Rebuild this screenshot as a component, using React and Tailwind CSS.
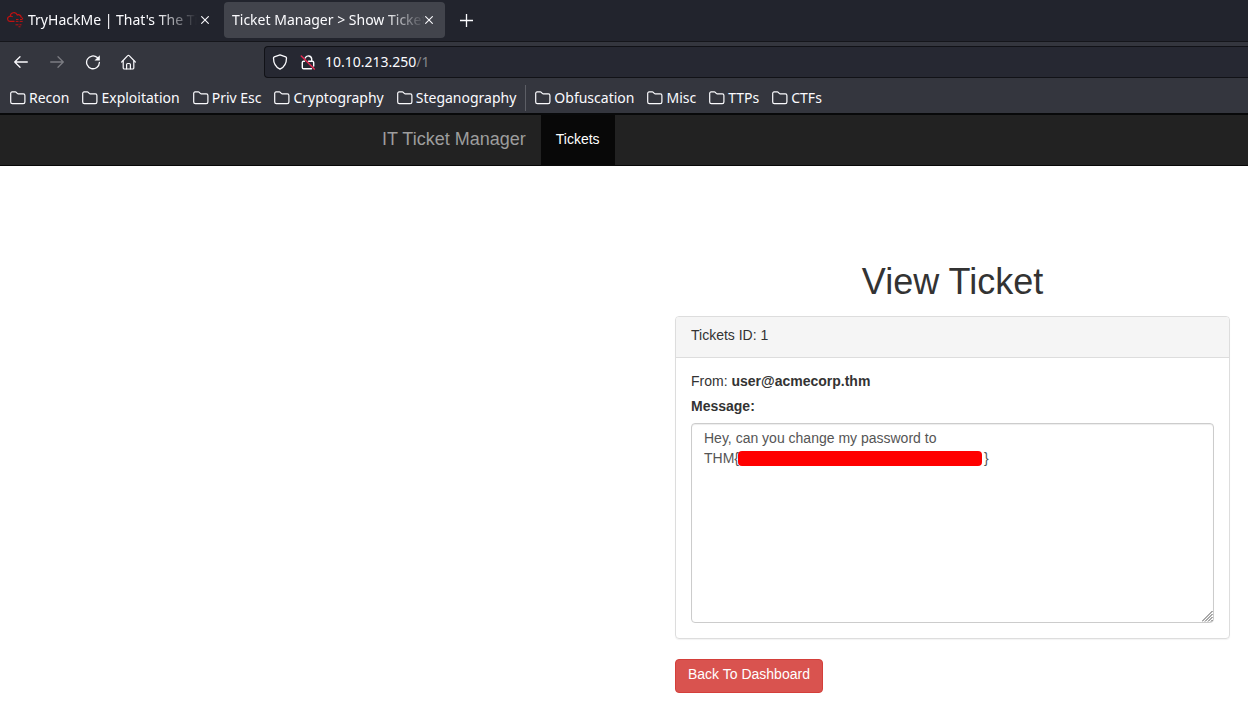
import React from "react";

const uiFont = "font-['Noto_Sans',sans-serif]";
const pageFont = "font-['Liberation_Sans',Arial,sans-serif]";

function Folder() {
  return (
    <svg width="16" height="16" viewBox="0 0 16 16" fill="none" stroke="#fbfbfe" strokeWidth="1.2" strokeLinejoin="round" aria-hidden="true">
      <path d="M.7 12V3.300a1.400 1.400 0 0 1 1.400-1.400h3.200c.4 0 .7.100 1 .4l1.200 1.300c.2.200.4.300.7.300h5.200a1.500 1.500 0 0 1 1.500 1.500V12a1.700 1.700 0 0 1-1.700 1.700H2.400A1.700 1.700 0 0 1 .7 12z" />
    </svg>
  );
}

function CloseIcon() {
  return (
    <svg width="8" height="8" viewBox="0 0 8 8" stroke="#fbfbfe" strokeWidth="1.1" aria-hidden="true">
      <path d="M.3.300l7.400 7.400M7.700.300L.3 7.700" />
    </svg>
  );
}

function CloudLogo() {
  return (
    <svg width="18" height="18" viewBox="0 0 18 18" fill="none" stroke="#c11111" strokeWidth="1.2" className="shrink-0" aria-hidden="true">
      <path d="M8.500 10.400H4a2.500 2.500 0 0 1-.6-4.900l.8-.1A3.700 3.700 0 0 1 11.300 3.900a2.900 2.900 0 0 1 3.900 2.300c.9.300 1.500.900 1.500 1.800" />
      <path d="M4.200 5.400c1-.3 1.900-.1 2.500.5" />
      <path d="M10 8.500h2.500M14 8.500h2.500M9.800 10.400h2.700M13.700 10.400h3M9.500 13.800h3M13.500 13.800h2M12.500 15.800h2" strokeWidth="1" />
    </svg>
  );
}

function BackIcon() {
  return (
    <svg width="16" height="16" viewBox="0 0 16 16" fill="none" stroke="currentColor" strokeWidth="1.3" strokeLinecap="round" strokeLinejoin="round" aria-hidden="true">
      <path d="M14.300 8H1.700M7 2.700L1.700 8 7 13.300" />
    </svg>
  );
}

function ForwardIcon() {
  return (
    <svg width="16" height="16" viewBox="0 0 16 16" fill="none" stroke="currentColor" strokeWidth="1.3" strokeLinecap="round" strokeLinejoin="round" aria-hidden="true">
      <path d="M1.700 8h12.600M9 2.700L14.300 8 9 13.300" />
    </svg>
  );
}

function ReloadIcon() {
  return (
    <svg width="16" height="16" viewBox="0 0 16 16" fill="none" stroke="#fbfbfe" strokeWidth="1.3" strokeLinecap="round" aria-hidden="true">
      <path d="M12.300 3.600A6.400 6.400 0 1 0 14.400 8.500" />
      <path d="M14.800 1.200v5.300H9.500z" fill="#fbfbfe" stroke="none" />
    </svg>
  );
}

function HomeIcon() {
  return (
    <svg width="16" height="16" viewBox="0 0 16 16" fill="none" stroke="#fbfbfe" strokeWidth="1.2" strokeLinecap="round" strokeLinejoin="round" aria-hidden="true">
      <path d="M.7 8l6-6.300a1 1 0 0 1 1.500 0L14.300 8" />
      <path d="M2.200 6.800V13.800a1.200 1.200 0 0 0 1.200 1.200h8.200a1.200 1.200 0 0 0 1.200-1.200V6.800" />
      <path d="M5.600 14.800V10.500a1 1 0 0 1 1-1h1.800a1 1 0 0 1 1 1v4.300" />
    </svg>
  );
}

function ShieldIcon() {
  return (
    <svg width="16" height="16" viewBox="0 0 16 16" fill="none" stroke="#fbfbfe" strokeWidth="1.3" strokeLinejoin="round" aria-hidden="true">
      <path d="M8 .8l5.700 2c.5.200.8.600.8 1.100 0 5-1.800 8.900-6.500 11.300C3.300 12.800 1.500 8.900 1.500 3.900c0-.5.300-.9.8-1.100z" />
    </svg>
  );
}

function InsecureIcon() {
  return (
    <svg width="16" height="16" viewBox="0 0 16 16" fill="none" stroke="#fbfbfe" strokeWidth="1.4" strokeLinecap="round" aria-hidden="true">
      <path d="M5.200 4A3.400 3.400 0 0 1 11.700 4.800V7" />
      <path d="M8.500 7.200h3.900a1.300 1.300 0 0 1 1.300 1.300v3.500M11.500 14.800H3.600a1.300 1.300 0 0 1-1.300-1.300V8.500c0-.7.600-1.300 1.300-1.300h.9" />
      <path d="M1.300 2L14.300 15" stroke="#e22850" strokeWidth="1.5" />
    </svg>
  );
}

function Tab({ title, active, children }) {
  return (
    <div className={active ? "flex h-9 w-[221px] items-center rounded bg-[#42444c] pr-3 pl-2" : "flex h-9 w-[217px] items-center gap-1 pr-2 pl-1.5"}>
      {children}
      <a href="#" className="min-w-0 flex-1 overflow-hidden whitespace-nowrap mask-[linear-gradient(to_left,transparent,black_40px)]">{title}</a>
      <button type="button" aria-label={`Close ${title}`} className="shrink-0"><CloseIcon /></button>
    </div>
  );
}

const firstBookmarks = ["Recon", "Exploitation", "Priv Esc", "Cryptography", "Steganography"];
const moreBookmarks = ["Obfuscation", "Misc", "TTPs", "CTFs"];

function Bookmark({ name }) {
  return (
    <button type="button" className="flex items-center gap-[3px] whitespace-nowrap">
      <Folder />
      {name}
    </button>
  );
}

function BrowserChrome() {
  return (
    <header className={`${uiFont} border-b-2 border-[#08090a] bg-[#34363e] text-sm text-[#fbfbfe]`}>
      <div className="flex h-[42px] items-center gap-[7px] border-b border-[#15161b] bg-[#22242d] pb-px">
        <Tab title="TryHackMe | That's The Ticket"><CloudLogo /></Tab>
        <Tab title="Ticket Manager > Show Ticket" active />
        <button type="button" aria-label="New tab" className="ml-2">
          <svg width="13" height="13" viewBox="0 0 13 13" stroke="#fbfbfe" strokeWidth="1.3" aria-hidden="true"><path d="M6.500 0v13M0 6.500h13" /></svg>
        </button>
      </div>
      <div className="flex h-10 items-center">
        <div className="flex w-[264px] shrink-0 items-center gap-5 pl-[13px]">
          <button type="button" aria-label="Back"><BackIcon /></button>
          <button type="button" aria-label="Forward" disabled className="text-[#7b7c82]"><ForwardIcon /></button>
          <button type="button" aria-label="Reload"><ReloadIcon /></button>
          <button type="button" aria-label="Home"><HomeIcon /></button>
        </div>
        <div className="flex h-8 min-w-0 flex-1 items-center gap-3 rounded-l border border-r-0 border-[#111217] bg-[#262832] pl-[7px]">
          <ShieldIcon />
          <div className="flex items-center gap-[9px]">
            <InsecureIcon />
            <a href="#">10.10.213.250<span className="text-[#85868c]">/1</span></a>
          </div>
        </div>
      </div>
      <nav aria-label="Bookmarks" className="flex h-[31px] items-center gap-[13px] pl-[10px]">
        {firstBookmarks.map((name) => <Bookmark key={name} name={name} />)}
        <div className="-mx-1 h-[26px] w-px bg-[#5c5e65]" />
        {moreBookmarks.map((name) => <Bookmark key={name} name={name} />)}
      </nav>
    </header>
  );
}

const message = "Hey, can you change my password to\nTHM{" + "\u00a0".repeat(63) + "}";

export default function App() {
  return (
    <div className="min-h-screen overflow-x-hidden bg-white">
      <BrowserChrome />
      <div className={`${pageFont} text-sm leading-5 text-[#333]`}>
        <nav className="flex h-[51px] border-b border-[#080808] bg-[#222] pl-[367px]">
          <a href="#" className="flex items-center px-[15px] pb-0.5 text-lg whitespace-nowrap text-[#9d9d9d]">IT Ticket Manager</a>
          <a href="#" className="flex items-center bg-[#080808] px-[15px] pb-0.5 text-white">Tickets</a>
        </nav>
        <main className="pt-24 pr-[18px] pl-[675px]">
          <h1 className="mb-[14px] text-center text-4xl">View Ticket</h1>
          <section className="mb-5 rounded border border-[#ddd] shadow-[0_1px_1px_rgba(0,0,0,0.05)]">
            <div className="rounded-t-[3px] border-b border-[#ddd] bg-[#f5f5f5] px-[15px] pt-2 pb-3">Tickets ID: 1</div>
            <div className="px-[15px] pt-[13px] pb-[15px]">
              <p>From: <b>user@acmecorp.thm</b></p>
              <label htmlFor="message" className="mt-[5px] mb-[7px] block font-bold">Message:</label>
              <div className="relative">
                <textarea
                  id="message"
                  defaultValue={message}
                  className="block h-[200px] w-full resize-none rounded border border-[#ccc] bg-white px-3 py-1 text-sm leading-5 text-[#555] shadow-[inset_0_1px_1px_rgba(0,0,0,0.075)] outline-none"
                />
                <div className="absolute top-7 left-[47px] h-[15px] w-[244px] rounded bg-[#f00]" />
                <svg className="absolute right-[1px] bottom-[1px]" width="11" height="11" viewBox="0 0 11 11" stroke="#555" strokeWidth="1" aria-hidden="true">
                  <path d="M0 10.500L10.500 0M3 10.500L10.500 3M6 10.500L10.500 6M9 10.500L10.500 9" />
                </svg>
              </div>
            </div>
          </section>
          <button type="button" className="h-[34px] rounded border border-[#d43f3a] bg-[#d9534f] px-3 pb-1 text-white">Back To Dashboard</button>
        </main>
      </div>
    </div>
  );
}
